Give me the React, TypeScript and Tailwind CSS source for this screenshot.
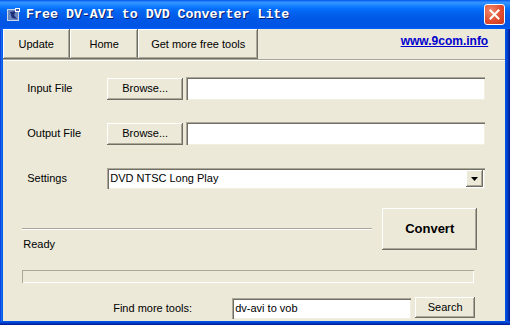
import React from "react";

const raised =
  "bg-[#ece9d8] shadow-[inset_-1px_-1px_0_#716f64,inset_1px_1px_0_#ffffff,inset_-2px_-2px_0_#aca899]";
const sunken =
  "bg-white shadow-[inset_1px_1px_0_#aca899,inset_2px_2px_0_#716f64,inset_-1px_-1px_0_#f1efe2]";

const TitleIcon = () => (
  <svg width="16" height="16" viewBox="0 0 16 16">
    <rect x="1" y="2" width="12" height="12" fill="#c8d4e8" />
    <rect x="2" y="3" width="10" height="10" fill="#6a86c0" />
    <path d="M4 5 L10 4 L8 8 L11 12 L6 11 Z" fill="#1e2f78" />
    <rect x="9" y="1" width="5" height="4" fill="#ffffff" />
    <rect x="10" y="2" width="3" height="2" fill="#3b5bb0" />
  </svg>
);

const Row = ({ label, children }: { label: string; children: React.ReactNode }) => (
  <div className="flex items-center h-[23px]">
    <span className="w-[85px] pl-[5px]">{label}</span>
    {children}
  </div>
);

export default function App() {
  return (
    <div
      className="w-[510px] h-[325px] flex flex-col bg-[#0055ea] text-[11px] text-black overflow-hidden"
      style={{ fontFamily: '"Liberation Sans", Arial, sans-serif' }}
    >
      {/* title bar */}
      <div className="h-[29px] flex items-center pl-[6px] pr-[5px] bg-[linear-gradient(to_bottom,#0058ee_0%,#3593ff_8%,#288eff_14%,#127dff_22%,#036ffc_30%,#0262ee_45%,#0057e5_70%,#0054e3_88%,#0055eb_94%,#005bf5_97%,#0062ef_100%)]">
        <TitleIcon />
        <span
          className="ml-[4px] text-white font-bold text-[13.3px] [text-shadow:1px_1px_0_#0a1e6e]"
          style={{ fontFamily: '"Liberation Mono", "Courier New", monospace' }}
        >
          Free DV-AVI to DVD Converter Lite
        </span>
        <div className="ml-auto w-[21px] h-[21px] rounded-[3px] border border-white bg-[radial-gradient(circle_at_30%_30%,#f08a6c,#e0482b_60%,#c73a1f)] flex items-center justify-center">
          <svg width="11" height="11" viewBox="0 0 11 11">
            <path d="M1.5 1.5 L9.5 9.5 M9.5 1.5 L1.5 9.5" stroke="#ffffff" strokeWidth="2" strokeLinecap="square" />
          </svg>
        </div>
      </div>

      <div className="flex-1 flex">
        <div className="w-[4px] bg-[linear-gradient(to_right,#0831d9,#166aee_50%,#0055ea)]" />
        <div className="flex-1 bg-[#ece9d8] flex flex-col">
          {/* toolbar */}
          <div className="flex h-[30px] items-stretch">
            <button className={`${raised} w-[67px] pr-[1px]`}>Update</button>
            <button className={`${raised} w-[68px]`}>Home</button>
            <button className={`${raised} w-[120px]`}>Get more free tools</button>
            <div className="flex-1 flex items-center justify-end pr-[17px] pb-[6px]">
              <span
                className="font-bold underline text-[12px] text-[#0000cc]"
                style={{ fontFamily: '"Liberation Sans", Verdana, sans-serif' }}
              >
                www.9com.info
              </span>
            </div>
          </div>
          <div className="h-[2px] border-t border-[#aca899] border-b border-b-white" />

          {/* form */}
          <div className="pl-[19px] pr-[20px] flex flex-col">
            <div className="mt-[16px]">
              <Row label="Input File">
                <button className={`${raised} w-[76px] h-[22px]`}>Browse...</button>
                <div className={`${sunken} ml-[3px] w-[299px] h-[23px]`} />
              </Row>
            </div>
            <div className="mt-[22px]">
              <Row label="Output File">
                <button className={`${raised} w-[76px] h-[22px]`}>Browse...</button>
                <div className={`${sunken} ml-[3px] w-[299px] h-[23px]`} />
              </Row>
            </div>
            <div className="mt-[22px]">
              <Row label="Settings">
                <div className={`${sunken} w-[378px] h-[21px] flex items-center pl-[3px] pr-[2px]`}>
                  <span>DVD NTSC Long Play</span>
                  <div className={`${raised} ml-auto w-[17px] h-[17px] flex items-center justify-center`}>
                    <svg width="7" height="4" viewBox="0 0 7 4">
                      <path d="M0 0 H7 L3.5 4 Z" fill="#000" />
                    </svg>
                  </div>
                </div>
              </Row>
            </div>

            {/* convert + status */}
            <div className="flex mt-[18px]">
              <div className="w-[350px] flex flex-col pt-[20px]">
                <div className="h-[2px] border-t border-[#aca899] border-b border-b-white" />
                <span className="mt-[6px] pl-[1px]">Ready</span>
              </div>
              <button
                className={`${raised} ml-[10px] w-[95px] h-[42px] font-bold text-[13px]`}
              >
                Convert
              </button>
            </div>
            <div className="mt-[17px] w-[452px] h-[13px] shadow-[inset_1px_1px_0_#aca899,inset_-1px_-1px_0_#ffffff]" />

            <div className="flex items-center mt-[15px] h-[21px]">
              <span className="ml-[91px] w-[119px]">Find more tools:</span>
              <div className={`${sunken} w-[179px] h-[21px] flex items-center pl-[3px] pt-[1px]`}>
                dv-avi to vob
              </div>
              <button className={`${raised} ml-[4px] w-[60px] h-[21px] mt-[-2px]`}>Search</button>
            </div>
          </div>
        </div>
        <div className="w-[6px] bg-[linear-gradient(to_right,#0055ea,#0040c8_50%,#00138c)]" />
      </div>
      <div className="h-[4px] bg-[linear-gradient(to_bottom,#0055ea,#0040c8_50%,#00138c)]" />
    </div>
  );
}
